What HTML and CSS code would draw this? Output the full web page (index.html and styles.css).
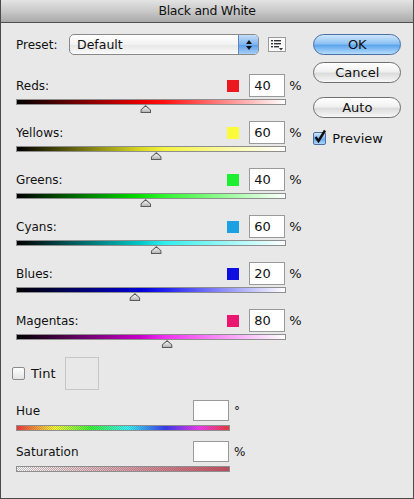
FILE: index.html
```html
<!DOCTYPE html>
<html>
<head>
<meta charset="utf-8">
<link rel="stylesheet" href="styles.css">
</head>
<body>
<div class="win">
  <div class="titlebar">Black and White</div>
  <div class="main">
    <div class="left">
      <div class="preset-row">
        <span class="preset-lbl">Preset:</span>
        <div class="select">
          <span class="sel-text">Default</span>
          <span class="sel-arrows">
            <svg width="8" height="12" viewBox="0 0 8 12"><path d="M4 1 L7 5 H1 Z M4 11 L7 7 H1 Z" fill="#111"/></svg>
          </span>
        </div>
        <div class="iconbtn">
          <svg width="14" height="12" viewBox="0 0 14 12">
            <rect x="1" y="1" width="2" height="1.4" fill="#333"/><rect x="4" y="1" width="7" height="1.4" fill="#333"/>
            <rect x="1" y="4" width="2" height="1.4" fill="#333"/><rect x="4" y="4" width="7" height="1.4" fill="#333"/>
            <rect x="1" y="7" width="2" height="1.4" fill="#333"/><rect x="4" y="7" width="5" height="1.4" fill="#333"/>
            <path d="M9 9 H13 L11 11.5 Z" fill="#333"/>
          </svg>
        </div>
      </div>

      <div class="slider">
        <div class="srow"><span class="lbl">Reds:</span><span class="swatch sw-red"></span><span class="field">40</span><span class="unit">%</span></div>
        <div class="track tr-red"><span class="thumb" style="left:48%"></span></div>
      </div>
      <div class="slider">
        <div class="srow"><span class="lbl">Yellows:</span><span class="swatch sw-yellow"></span><span class="field">60</span><span class="unit">%</span></div>
        <div class="track tr-yellow"><span class="thumb" style="left:52%"></span></div>
      </div>
      <div class="slider">
        <div class="srow"><span class="lbl">Greens:</span><span class="swatch sw-green"></span><span class="field">40</span><span class="unit">%</span></div>
        <div class="track tr-green"><span class="thumb" style="left:48%"></span></div>
      </div>
      <div class="slider">
        <div class="srow"><span class="lbl">Cyans:</span><span class="swatch sw-cyan"></span><span class="field">60</span><span class="unit">%</span></div>
        <div class="track tr-cyan"><span class="thumb" style="left:52%"></span></div>
      </div>
      <div class="slider">
        <div class="srow"><span class="lbl">Blues:</span><span class="swatch sw-blue"></span><span class="field">20</span><span class="unit">%</span></div>
        <div class="track tr-blue"><span class="thumb" style="left:44%"></span></div>
      </div>
      <div class="slider">
        <div class="srow"><span class="lbl">Magentas:</span><span class="swatch sw-magenta"></span><span class="field">80</span><span class="unit">%</span></div>
        <div class="track tr-magenta"><span class="thumb" style="left:56%"></span></div>
      </div>

      <div class="tint-row">
        <span class="cbox"></span>
        <span class="tint-lbl">Tint</span>
        <span class="tint-swatch"></span>
      </div>

      <div class="hs-row"><span class="hs-lbl">Hue</span><span class="hs-field"></span><span class="hs-unit">°</span></div>
      <div class="hs-bar hue-bar"></div>
      <div class="hs-row"><span class="hs-lbl">Saturation</span><span class="hs-field"></span><span class="hs-unit">%</span></div>
      <div class="hs-bar sat-bar"></div>
    </div>

    <div class="right">
      <div class="btn btn-ok">OK</div>
      <div class="btn btn-cancel">Cancel</div>
      <div class="btn btn-auto">Auto</div>
      <div class="preview-row">
        <span class="cbox-checked">
          <svg width="14" height="15" viewBox="0 0 14 15"><path d="M2.5 8 L5.5 12 L12 1.5" fill="none" stroke="#111" stroke-width="2.4"/></svg>
        </span>
        <span class="preview-lbl">Preview</span>
      </div>
    </div>
  </div>
</div>
</body>
</html>
```

FILE: styles.css
```css
html, body {
  margin: 0;
  padding: 0;
  background: #e8e8e8;
}
body {
  font-family: "DejaVu Sans", "Liberation Sans", sans-serif;
  font-size: 12px;
  color: #111;
}
.win {
  width: 414px;
  height: 499px;
  box-sizing: border-box;
  border: 1px solid #4a4a4a;
  border-top: none;
  background: #e8e8e8;
  overflow: hidden;
}
.titlebar {
  height: 22px;
  line-height: 22px;
  text-align: center;
  font-size: 12.5px;
  letter-spacing: -0.3px;
  color: #111;
  background: linear-gradient(#e3e3e3, #c9c9c9 50%, #a9a9a9);
  border-bottom: 1px solid #4f4f4f;
  border-top: 1px solid #d9d9d9;
  margin-top: -1px;
}
.main {
  display: flex;
}
.left {
  width: 298px;
  padding-left: 15px;
  box-sizing: border-box;
}
.preset-row {
  display: flex;
  align-items: center;
  height: 21px;
  margin-top: 11px;
}
.preset-lbl {
  width: 53px;
}
.select {
  width: 190px;
  height: 21px;
  box-sizing: border-box;
  border: 1px solid #8a8a8a;
  border-radius: 5px;
  background: linear-gradient(#ffffff, #f2f2f2 50%, #e6e6e6 51%, #fafafa);
  display: flex;
  align-items: center;
  overflow: hidden;
}
.sel-text {
  flex: 1;
  padding-left: 7px;
  font-size: 12.5px;
}
.sel-arrows {
  width: 19px;
  height: 100%;
  display: flex;
  align-items: center;
  justify-content: center;
  border-left: 1px solid #5c86c0;
  background: linear-gradient(#c4def8, #7fb3ec 50%, #5a9be6 51%, #a6d0f7);
}
.iconbtn {
  width: 18px;
  height: 15px;
  box-sizing: border-box;
  border: 1px solid #9a9a9a;
  background: #fbfbfb;
  margin-left: 9px;
  display: flex;
  align-items: center;
  justify-content: center;
}
.slider {
  margin-top: 19px;
}
.slider + .slider {
  margin-top: 16px;
}
.srow {
  display: flex;
  align-items: center;
  height: 23px;
}
.lbl {
  flex: 1;
}
.swatch {
  width: 12px;
  height: 12px;
  margin-right: 10px;
}
.sw-red { background: #ec1820; }
.sw-yellow { background: #fbfb3c; }
.sw-green { background: #1eee30; }
.sw-cyan { background: #1ba0e2; }
.sw-blue { background: #0e0ee0; }
.sw-magenta { background: #ea1670; }
.field {
  width: 36px;
  height: 23px;
  box-sizing: border-box;
  border: 1px solid #9a9a9a;
  background: #fff;
  font-size: 13px;
  line-height: 21px;
  padding-left: 4px;
}
.unit {
  width: 9px;
  margin-left: 4px;
  font-size: 13px;
}
.track {
  position: relative;
  width: 270px;
  height: 6px;
  box-sizing: border-box;
  border: 1px solid #8e8e8e;
  margin-top: 2px;
}
.tr-red { background: linear-gradient(to right, #000, #e80000 46%, #ff1010 55%, #fff); }
.tr-yellow { background: linear-gradient(to right, #000, #d8d820 46%, #f4f440 55%, #fff); }
.tr-green { background: linear-gradient(to right, #000, #00d800 44%, #30f530 55%, #fff); }
.tr-cyan { background: linear-gradient(to right, #000, #00c8c8 46%, #30eeee 55%, #fff); }
.tr-blue { background: linear-gradient(to right, #000, #0000d8 46%, #2020f0 55%, #fff); }
.tr-magenta { background: linear-gradient(to right, #000, #c800c8 46%, #ee30ee 55%, #fff); }
.thumb {
  position: absolute;
  top: 5px;
  width: 11px;
  height: 8px;
  transform: translateX(-50%);
}
.thumb::before {
  content: "";
  position: absolute;
  left: 0;
  top: 0;
  width: 11px;
  height: 8px;
  background: #5a5a5a;
  clip-path: polygon(50% 0, 100% 62%, 100% 100%, 0 100%, 0 62%);
}
.thumb::after {
  content: "";
  position: absolute;
  left: 1px;
  top: 1.5px;
  width: 9px;
  height: 5.5px;
  background: linear-gradient(#f2f2f2, #b4b4b4);
  clip-path: polygon(50% 0, 100% 62%, 100% 100%, 0 100%, 0 62%);
}
.tint-row {
  display: flex;
  align-items: center;
  height: 33px;
  margin-top: 17px;
  margin-left: -4px;
}
.cbox {
  width: 13px;
  height: 13px;
  box-sizing: border-box;
  border: 1px solid #8a8a8a;
  border-radius: 2px;
  background: linear-gradient(#fdfdfd, #e4e4e4);
}
.tint-lbl {
  margin-left: 6px;
  font-size: 13px;
  width: 34px;
}
.tint-swatch {
  width: 34px;
  height: 33px;
  box-sizing: border-box;
  border: 1px solid #c6c6c6;
  background: #e8e8e8;
}
.hs-row {
  display: flex;
  align-items: center;
  height: 21px;
  margin-top: 10px;
}
.hs-lbl {
  width: 177px;
}
.hs-field {
  width: 36px;
  height: 21px;
  box-sizing: border-box;
  border: 1px solid #9a9a9a;
  background: #fff;
}
.hs-unit {
  margin-left: 5px;
  font-size: 12px;
}
.hs-bar {
  width: 214px;
  height: 6px;
  box-sizing: border-box;
  border: 1px solid #8e8e8e;
  margin-top: 4px;
}
.hue-bar {
  background:
    repeating-conic-gradient(rgba(140,140,140,0.45) 0 25%, rgba(255,255,255,0.2) 0 50%) 0 0 / 2px 2px,
    linear-gradient(to right, #f00, #ff0 18%, #0f0 35%, #0ff 52%, #00f 70%, #f0f 86%, #f00);
}
.sat-bar {
  background:
    repeating-conic-gradient(rgba(120,120,120,0.5) 0 25%, rgba(255,255,255,0.1) 0 50%) 0 0 / 2px 2px,
    linear-gradient(to right, #fff, #c83048);
}
.right {
  width: 100px;
  padding-left: 15px;
  padding-top: 11px;
}
.btn {
  width: 88px;
  height: 21px;
  box-sizing: border-box;
  border: 1px solid #6f6f6f;
  border-radius: 11px;
  text-align: center;
  line-height: 19px;
  font-size: 13px;
  background: linear-gradient(#ffffff, #f1f1f1 45%, #dcdcdc 55%, #f7f7f7);
}
.btn-ok {
  border-color: #4a6fa3;
  background: linear-gradient(#cfe6fc, #8fc2f3 45%, #5ca6ee 55%, #b7dcfb);
}
.btn-cancel {
  margin-top: 7px;
}
.btn-auto {
  margin-top: 14px;
}
.preview-row {
  display: flex;
  align-items: center;
  margin-top: 13px;
  height: 15px;
}
.cbox-checked {
  width: 13px;
  height: 13px;
  box-sizing: border-box;
  border: 1px solid #4d6f9e;
  border-radius: 2px;
  background: linear-gradient(#cfe6fc, #7bb6ef 50%, #5ea6ee 51%, #b0d8fa);
  position: relative;
}
.cbox-checked svg {
  position: absolute;
  left: -1px;
  top: -4px;
}
.preview-lbl {
  margin-left: 6px;
  font-size: 13px;
}
```
